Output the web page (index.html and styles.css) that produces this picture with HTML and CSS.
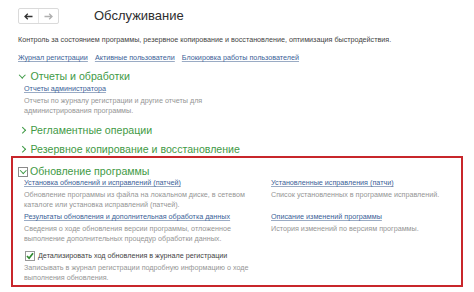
FILE: index.html
```html
<!DOCTYPE html>
<html>
<head>
    <meta charset="utf-8">
    <link rel="stylesheet" href="styles.css">
</head>
<body>
    <div class="header">
        <div class="nav">
            <span class="nav-btn">
                <svg width="9" height="7" viewBox="0 0 9 7"><path d="M1 3.5 H8.5 M3.8 0.8 L1 3.5 L3.8 6.2" stroke="#333" stroke-width="1.3" fill="none"/></svg>
            </span>
            <span class="nav-btn">
                <svg width="9" height="7" viewBox="0 0 9 7"><path d="M0.5 3.5 H8 M5.2 0.8 L8 3.5 L5.2 6.2" stroke="#b0b0b0" stroke-width="1.3" fill="none"/></svg>
            </span>
        </div>
        <div class="title">Обслуживание</div>
    </div>

    <div class="intro">Контроль за состоянием программы, резервное копирование и восстановление, оптимизация быстродействия.</div>

    <div class="links">
        <a>Журнал регистрации</a>
        <a>Активные пользователи</a>
        <a>Блокировка работы пользователей</a>
    </div>

    <div class="group">
        <div class="group-head"><span class="chev down"></span>Отчеты и обработки</div>
        <div class="item">
            <a>Отчеты администратора</a>
            <p>Отчеты по журналу регистрации и другие отчеты для<br>администрирования программы.</p>
        </div>
    </div>

    <div class="group gap">
        <div class="group-head"><span class="chev right"></span>Регламентные операции</div>
    </div>

    <div class="group gap last">
        <div class="group-head"><span class="chev right"></span>Резервное копирование и восстановление</div>
    </div>

    <div class="update">
        <div class="group-head"><span class="box-chev"><span class="chev down"></span></span>Обновление программы</div>
        <div class="cols">
            <div class="item">
                <a>Установка обновлений и исправлений (патчей)</a>
                <p>Обновление программы из файла на локальном диске, в сетевом<br>каталоге или установка исправлений (патчей).</p>
            </div>
            <div class="item">
                <a>Установленные исправления (патчи)</a>
                <p>Список установленных в программе исправлений.</p>
            </div>
            <div class="item">
                <a>Результаты обновления и дополнительная обработка данных</a>
                <p>Сведения о ходе обновления версии программы, отложенное<br>выполнение дополнительных процедур обработки данных.</p>
            </div>
            <div class="item">
                <a>Описание изменений программы</a>
                <p>История изменений по версиям программы.</p>
            </div>
        </div>
        <div class="check">
            <span class="checkbox">
                <svg width="8" height="8" viewBox="0 0 8 8"><path d="M1 4 L3.1 6.3 L7 1.2" stroke="#2f8a2f" stroke-width="1.7" fill="none"/></svg>
            </span>
            Детализировать ход обновления в журнале регистрации
        </div>
        <p class="check-note">Записывать в журнал регистрации подробную информацию о ходе<br>выполнения обновления.</p>
    </div>
</body>
</html>
```

FILE: styles.css
```css
body {
    margin: 0;
    background: #fff;
    font-family: "Liberation Sans", Arial, sans-serif;
    font-size: 7.2px;
    line-height: 10px;
    color: #444;
}

.header {
    display: flex;
    align-items: center;
    height: 16px;
    padding: 8px 0 0 18px;
}

.nav {
    display: flex;
    border: 1px solid #dadada;
    border-radius: 2px;
    height: 14px;
}

.nav-btn {
    display: flex;
    align-items: center;
    justify-content: center;
    width: 19px;
}

.nav-btn + .nav-btn {
    border-left: 1px solid #e6e6e6;
}

.title {
    margin-left: 35px;
    font-size: 13px;
    line-height: 16px;
    color: #2e2e2e;
}

.intro {
    margin: 11px 0 0 18px;
}

.links {
    display: flex;
    gap: 7px;
    margin: 8px 0 0 18px;
}

a {
    color: #3b5f98;
    text-decoration: underline;
    text-decoration-color: #9aabc4;
}

.group {
    margin: 8px 0 0 20px;
}

.group.gap {
    margin-top: 9px;
}

.group.last {
    margin-top: 8px;
}

.group-head {
    display: flex;
    align-items: center;
    font-size: 10.6px;
    line-height: 11px;
    color: #3f9a46;
}

.chev {
    display: inline-block;
    width: 3.5px;
    height: 3.5px;
    border-right: 1.2px solid #3f9a46;
    border-bottom: 1.2px solid #3f9a46;
    margin-right: 6px;
}

.chev.down {
    transform: translateY(-1.5px) rotate(45deg);
}

.chev.right {
    transform: rotate(-45deg);
}

.item {
    margin: 2px 0 0 4px;
}

.item p {
    margin: 2px 0 0;
    color: #959595;
    white-space: nowrap;
}

.update {
    margin: 1px 11px 0 11px;
    border: 2px solid #c8262b;
    padding: 8px 0 2px 5px;
}

.box-chev {
    display: flex;
    align-items: center;
    justify-content: center;
    width: 8px;
    height: 8px;
    border: 1px solid #8a8a8a;
    margin-right: 2px;
}

.box-chev .chev {
    margin: 0;
    transform: translateY(-1px) rotate(45deg);
}

.cols {
    display: grid;
    grid-template-columns: 247px 1fr;
    row-gap: 1px;
    margin-left: 6px;
}

.cols .item {
    margin: 1px 0 0;
}

.check {
    display: flex;
    align-items: center;
    margin: 7px 0 0 7px;
    color: #444;
}

.checkbox {
    display: flex;
    align-items: center;
    justify-content: center;
    width: 8px;
    height: 8px;
    border: 1px solid #999;
    margin-right: 3px;
}

.check-note {
    margin: 2px 0 0 6px;
    color: #959595;
    white-space: nowrap;
}
```
